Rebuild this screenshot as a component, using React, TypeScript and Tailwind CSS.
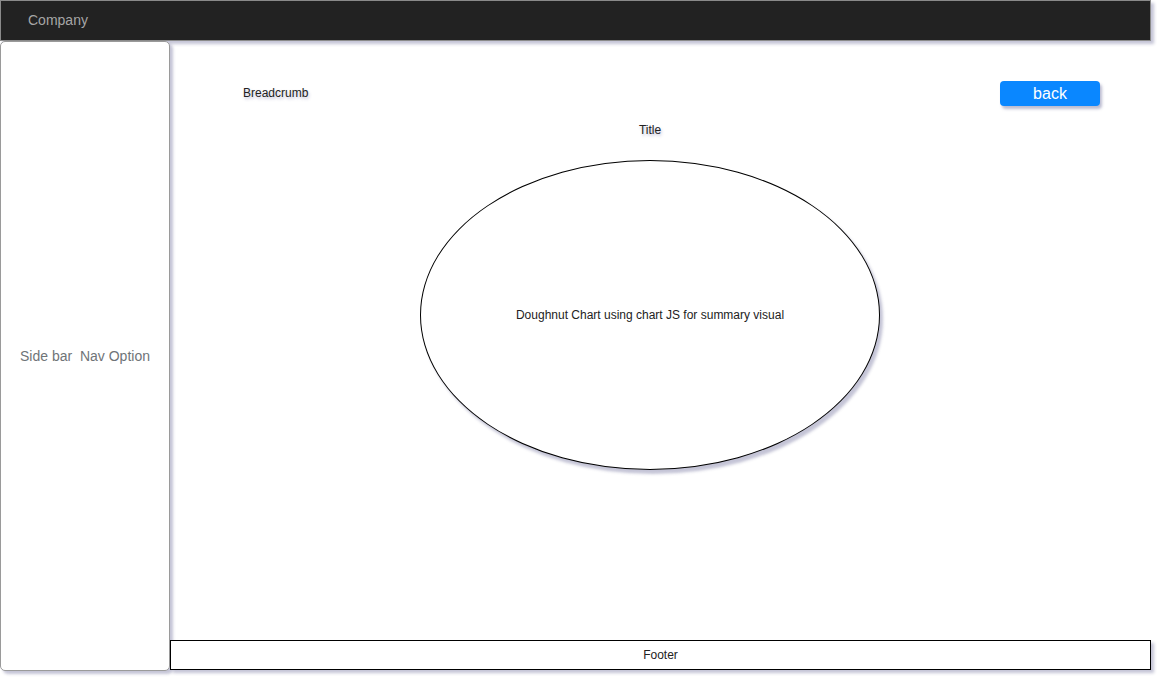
export default function App() {
  const txtShadow = "[text-shadow:1px_2px_3px_rgba(70,70,140,0.35)]"
  return (
    <div className="w-[1162px] h-[682px] bg-white overflow-hidden font-['Liberation_Sans',Arial,sans-serif]">
      <div className="w-[1151px] flex flex-col">
        {/* Header */}
        <div className="h-[41px] bg-[#222222] border border-[#8a8a8a] shadow-[3px_3px_3px_rgba(60,60,120,0.3)] flex items-center pl-[27px]">
          <span className="text-[14px] text-[#a6a6a6]">Company</span>
        </div>

        <div className="flex h-[630px]">
          {/* Sidebar */}
          <div className="w-[170px] bg-white border border-[#9a9a9a] rounded-[5px] shadow-[3px_3px_3px_rgba(60,60,120,0.3)] flex items-center justify-center">
            <span className="text-[14px] text-[#6f7478] whitespace-pre">Side bar  Nav Option</span>
          </div>

          {/* Main */}
          <div className="flex-1 flex flex-col">
            <div className="flex-1 flex flex-col pt-[40px]">
              <div className="flex items-center justify-between pl-[73px] pr-[51px] h-[25px]">
                <span className={`text-[12px] leading-[14px] -mt-[1px] text-[#222] ${txtShadow}`}>Breadcrumb</span>
                <button className="w-[100px] h-[25px] rounded-[4px] bg-[#0a87ff] text-white text-[16px] leading-none shadow-[2px_3px_3px_rgba(60,60,120,0.35)]">
                  back
                </button>
              </div>

              <div className="ml-[250px] w-[460px] flex flex-col items-center">
                <div className={`mt-[17px] text-[12px] leading-[14px] text-[#222] ${txtShadow}`}>Title</div>
                <div className="mt-[23px] w-[460px] h-[310px] rounded-[50%] border border-black bg-white shadow-[3px_4px_3px_rgba(60,60,120,0.3)] flex items-center justify-center">
                  <span className="text-[12px] text-[#222]">Doughnut Chart using chart JS for summary visual</span>
                </div>
              </div>
            </div>

            {/* Footer */}
            <div className="h-[30px] mb-[1px] border border-black bg-white shadow-[3px_3px_3px_rgba(60,60,120,0.3)] flex items-center justify-center">
              <span className="text-[12px] text-[#222]">Footer</span>
            </div>
          </div>
        </div>
      </div>
    </div>
  )
}
